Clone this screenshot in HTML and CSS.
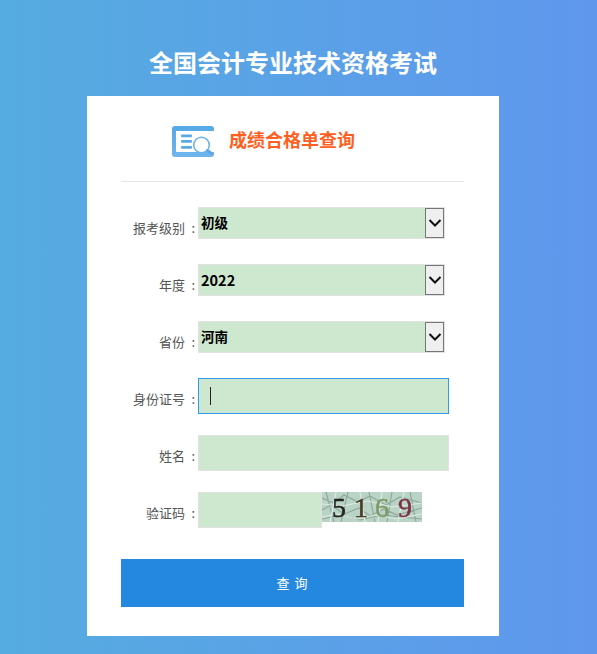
FILE: index.html
```html
<!DOCTYPE html>
<html lang="zh-CN">
<head>
    <meta charset="UTF-8">
    <meta name="viewport" content="width=device-width, initial-scale=1.0">
    <title>全国会计专业技术资格考试</title>
    <link rel="stylesheet" href="styles.css">
</head>
<body>

<div class="wrap">
    <h1 class="page-title">全国会计专业技术资格考试</h1>

    <div class="card">
        <div class="card-head">
            <svg class="head-icon" width="42" height="31" viewBox="0 0 42 31">
                <defs>
                    <linearGradient id="iconBlue" x1="0" y1="0" x2="0" y2="1">
                        <stop offset="0" stop-color="#55a9e6"/>
                        <stop offset="1" stop-color="#70b6ef"/>
                    </linearGradient>
                </defs>
                <rect width="42" height="31" rx="3" fill="url(#iconBlue)"/>
                <rect x="4" y="5" width="38" height="21" fill="#fff"/>
                <rect x="9" y="8.500" width="11" height="2.800" rx="1" fill="#5ba8e6"/>
                <rect x="9" y="14" width="11" height="2.800" rx="1" fill="#5ba8e6"/>
                <rect x="9" y="20" width="11" height="2.800" rx="1" fill="#5ba8e6"/>
                <circle cx="29.500" cy="19" r="7.800" fill="#fff" stroke="#6cb2ec" stroke-width="1.600"/>
                <path d="M35.500 24.500l4.500 3.500" stroke="#5ba8e6" stroke-width="3" stroke-linecap="round"/>
            </svg>
            <span class="head-title">成绩合格单查询</span>
        </div>

        <form class="query-form">
            <div class="row">
                <label class="row-label">报考级别 :</label>
                <div class="select-box">
                    <select class="select-field"><option>初级</option></select>
                    <span class="select-arrow"><svg width="14" height="8" viewBox="0 0 14 8"><path d="M1.500 1l5.500 5.500L12.500 1" fill="none" stroke="#111" stroke-width="2"/></svg></span>
                </div>
            </div>
            <div class="row">
                <label class="row-label">年度 :</label>
                <div class="select-box">
                    <select class="select-field select-year"><option>2022</option></select>
                    <span class="select-arrow"><svg width="14" height="8" viewBox="0 0 14 8"><path d="M1.500 1l5.500 5.500L12.500 1" fill="none" stroke="#111" stroke-width="2"/></svg></span>
                </div>
            </div>
            <div class="row">
                <label class="row-label">省份 :</label>
                <div class="select-box">
                    <select class="select-field"><option>河南</option></select>
                    <span class="select-arrow"><svg width="14" height="8" viewBox="0 0 14 8"><path d="M1.500 1l5.500 5.500L12.500 1" fill="none" stroke="#111" stroke-width="2"/></svg></span>
                </div>
            </div>
            <div class="row row-input">
                <label class="row-label">身份证号 :</label>
                <div class="input-box">
                    <input class="text-field is-focus" type="text">
                    <span class="caret"></span>
                </div>
            </div>
            <div class="row row-input">
                <label class="row-label">姓名 :</label>
                <input class="text-field" type="text">
            </div>
            <div class="row row-captcha">
                <label class="row-label">验证码 :</label>
                <input class="text-field code-field" type="text">
                <svg class="captcha" width="100" height="30" viewBox="0 0 100 30">
                    <rect width="100" height="30" fill="#b9d4c6"/>
                    <path d="M0 6l12 5 10-8 14 7 12-6 16 9 14-8 22 6M0 18l9-5 13 9 15-6 11 8 14-7 13 6 25-7M4 0l8 30M26 0l-7 30M47 0l6 30M70 0l-5 30M88 0l6 30M0 27l20-4 18 5 22-5 40 4" fill="none" stroke="#8fa99b" stroke-width="1.200"/>
                    <path d="M0 25l15-3 20 5 18-4 22 4 25-5M0 12l20 2 26-5 24 6 30-4M14 0l-6 30M38 0l5 30M60 0l-4 30M82 0l-6 30" fill="none" stroke="#dcebe2" stroke-width="1.200"/>
                    <g class="captcha-digits">
                        <text x="10" y="25" fill="#222" stroke="#222">5</text>
                        <text x="32" y="25" fill="#4a3b2a" stroke="#4a3b2a">1</text>
                        <text x="53" y="25" fill="#7f9a68" stroke="#7f9a68">6</text>
                        <text x="76" y="25" fill="#7b2f45" stroke="#7b2f45">9</text>
                    </g>
                </svg>
            </div>
            <button class="query-button" type="button">查 询</button>
        </form>
    </div>
</div>

</body>
</html>
```

FILE: styles.css
```css
body {
    margin: 0;
    min-height: 100vh;
    background: linear-gradient(to right, #55ace0, #5f97ed);
    font-family: "Noto Sans CJK SC", "Liberation Sans", sans-serif;
}

.wrap {
    width: 412px;
    margin-left: 87px;
    padding-bottom: 18px;
}

.page-title {
    margin: 0;
    padding-top: 39px;
    height: 57px;
    line-height: 46px;
    font-size: 24px;
    font-weight: bold;
    color: #fff;
    text-align: center;
    white-space: nowrap;
}

.card {
    background-color: #fff;
    padding: 0 35px 29px 34px;
    height: 511px;
}

.card-head {
    display: flex;
    align-items: center;
    height: 86px;
    padding-left: 51px;
    border-bottom: 1px solid #e6e6e6;
    box-sizing: border-box;
}

.head-icon {
    margin-top: 6px;
    margin-right: 15px;
}

.head-title {
    font-size: 18px;
    font-weight: bold;
    color: #ff5f1f;
}

.query-form {
    padding-top: 25px;
}

.row {
    display: flex;
    align-items: flex-start;
    margin-bottom: 25px;
}

.row-input {
    margin-bottom: 21px;
}

.row-label {
    width: 77px;
    flex: none;
    box-sizing: border-box;
    padding-top: 10px;
    padding-right: 3px;
    font-size: 13px;
    word-spacing: 3.500px;
    line-height: 22px;
    color: #555;
    text-align: right;
    white-space: nowrap;
}

.select-box {
    display: flex;
    width: 247px;
    height: 32px;
    box-sizing: border-box;
    border: 1px solid #e2e2e2;
    background-color: #cee8d0;
}

.select-field {
    flex: 1;
    min-width: 0;
    appearance: none;
    border: none;
    outline: none;
    background: transparent;
    padding: 0 2px 2px;
    font-family: "Noto Sans CJK SC", "Liberation Sans", sans-serif;
    font-size: 13.500px;
    font-weight: bold;
    color: #000;
}

.select-year {
    font-size: 14.500px;
}

.select-arrow {
    display: flex;
    align-items: center;
    justify-content: center;
    width: 19px;
    flex: none;
    box-sizing: border-box;
    border: 1px solid #767676;
    background-color: #efefef;
}

.input-box {
    position: relative;
    display: flex;
}

.text-field {
    display: block;
    width: 251px;
    height: 36px;
    box-sizing: border-box;
    margin: 0;
    padding: 0 11px;
    border: 1px solid #e2e2e2;
    border-radius: 0;
    outline: none;
    background-color: #cee8d0;
    font-size: 14px;
}

.is-focus {
    border-color: #2e9bee;
}

.caret {
    position: absolute;
    left: 12px;
    top: 9px;
    width: 1px;
    height: 18px;
    background-color: #222;
}

.code-field {
    width: 124px;
    flex: none;
}

.captcha {
    display: block;
    flex: none;
}

.captcha-digits {
    font-family: "Liberation Serif", serif;
    font-size: 28px;
    stroke-width: 0.5px;
    filter: blur(0.4px);
}

.row-captcha {
    margin-bottom: 31px;
}

.query-button {
    display: block;
    width: 343px;
    height: 48px;
    padding: 0 0 2px;
    border: none;
    background-color: #2488e0;
    color: #fff;
    font-family: "Noto Sans CJK SC", "Liberation Sans", sans-serif;
    font-size: 13px;
    letter-spacing: 1px;
    cursor: pointer;
}
```
